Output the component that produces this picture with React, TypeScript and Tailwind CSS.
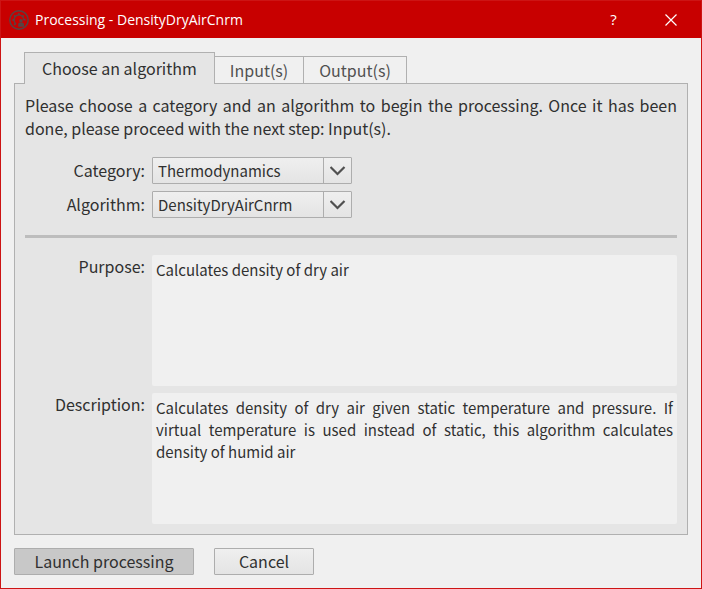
import { useState } from "react";

const body = "font-['Noto_Sans_CJK_SC','Noto_Sans',sans-serif]";

function AppIcon() {
  return (
    <svg viewBox="0 0 20 20" className="size-5 shrink-0" fill="none" stroke="#574444" aria-hidden="true">
      <circle cx="10" cy="10" r="9.2" strokeWidth="1.4" />
      <path d="M7 13.8A4.9 4.9 0 1 1 14.8 10" strokeWidth="1.3" />
      <path
        d="M3.4 10h2M5.2 5.4l1.4 1.4M9.9 3.2v2M14.6 5.4l-1.4 1.4M14.6 9.6h2M5.2 14.8l1.5-1.5"
        strokeWidth="1.8"
      />
      <circle cx="12" cy="10.8" r="1.7" fill="#574444" stroke="none" />
      <path d="M9.2 16.8v-2.2c0-1.4 1-2 2.8-2s3 .6 3 2v2.2z" fill="#574444" stroke="none" />
    </svg>
  );
}

function TitleBar() {
  return (
    <header className="flex h-[37px] items-center bg-[#c80000] pl-2 font-['Open_Sans',sans-serif] text-white">
      <AppIcon />
      <h1 className="ml-1.5 flex-1 text-sm">Processing - DensityDryAirCnrm</h1>
      <button type="button" aria-label="Help" className="flex h-full w-[55px] items-center justify-center text-[15px]">
        ?
      </button>
      <button type="button" aria-label="Close" className="flex h-full w-[60px] items-center justify-center">
        <svg viewBox="0 0 12 12" className="size-3" stroke="white" strokeWidth="1.2" aria-hidden="true">
          <path d="M.5.5l11 11M11.5.5l-11 11" />
        </svg>
      </button>
    </header>
  );
}

function Picker({ id, label, options }: { id: string; label: string; options: string[] }) {
  return (
    <>
      <label htmlFor={id} className="text-right text-base leading-[27px]">
        {label}
      </label>
      <div className="relative w-[200px]">
        <select
          id={id}
          className="block h-[27px] w-full appearance-none rounded-[1px] border border-[#adadad] bg-linear-to-b from-[#efefef] to-[#e4e4e4] pr-8 pl-[5px] text-[15px] leading-[25px]"
        >
          {options.map((option) => (
            <option key={option}>{option}</option>
          ))}
        </select>
        <span className="pointer-events-none absolute inset-y-0 right-0 flex w-[29px] items-center justify-center border-l border-[#adadad]">
          <svg viewBox="0 0 16 10" className="h-2.5 w-4" fill="none" stroke="#505050" strokeWidth="2.2" aria-hidden="true">
            <path d="M.5 1L7.5 8 14.5 1" />
          </svg>
        </span>
      </div>
    </>
  );
}

function Info({ id, label, text }: { id: string; label: string; text: string }) {
  return (
    <>
      <label htmlFor={id} className="text-right text-base leading-[22px]">
        {label}
      </label>
      <textarea
        id={id}
        readOnly
        value={text}
        className="block h-full min-h-[80px] w-full resize-none rounded-[2px] bg-[#f0f0f0] p-1 text-justify text-[15px] leading-[22px] outline-none"
      />
    </>
  );
}

const tabs = ["Choose an algorithm", "Input(s)", "Output(s)"];

export default function App() {
  const [active, setActive] = useState(0);
  return (
    <div className={`flex min-h-screen flex-col border border-[#cd1414] bg-[#f0f0f0] text-[#303030] ${body}`}>
      <TitleBar />
      <main className="flex flex-1 flex-col px-[13px] pt-3.5 pb-[13px]">
        <div role="tablist" className="-mb-px flex items-end pl-2.5">
          {tabs.map((tab, i) => (
            <button
              key={tab}
              type="button"
              role="tab"
              aria-selected={i === active}
              onClick={() => setActive(i)}
              className={
                i === active
                  ? "z-10 -mr-px h-8 border border-b-0 border-[#b0b0b0] bg-[#e5e5e5] px-[17px] pb-0.5 text-base leading-[30px]"
                  : "-mr-px h-7 border border-[#b0b0b0] px-[15px] text-base leading-[26px] text-[#505050]"
              }
            >
              {tab}
            </button>
          ))}
        </div>
        <section role="tabpanel" className="flex flex-1 flex-col border border-[#b0b0b0] bg-[#e5e5e5] p-2.5">
          <p className="text-justify text-base leading-[23px]">
            Please choose a category and an algorithm to begin the processing. Once it has been done, please proceed
            with the next step: Input(s).
          </p>
          <div className="mt-[17px] grid grid-cols-[120px_1fr] gap-[7px]">
            <Picker id="category" label="Category:" options={["Thermodynamics"]} />
            <Picker id="algorithm" label="Algorithm:" options={["DensityDryAirCnrm"]} />
          </div>
          <hr className="my-[17px] border-t-3 border-[#bdbdbd]" />
          <div className="grid flex-1 grid-cols-[120px_1fr] grid-rows-2 gap-[7px]">
            <Info id="purpose" label="Purpose:" text="Calculates density of dry air" />
            <Info
              id="description"
              label="Description:"
              text="Calculates density of dry air given static temperature and pressure. If virtual temperature is used instead of static, this algorithm calculates density of humid air"
            />
          </div>
        </section>
        <footer className="mt-[13px] flex gap-5 text-base leading-[25px]">
          <button type="button" className="h-[27px] w-[180px] rounded-[1px] border border-[#adadad] bg-[#c8c8c8]">
            Launch processing
          </button>
          <button
            type="button"
            className="h-[27px] w-[100px] rounded-[1px] border border-[#adadad] bg-linear-to-b from-[#efefef] to-[#e4e4e4]"
          >
            Cancel
          </button>
        </footer>
      </main>
    </div>
  );
}
